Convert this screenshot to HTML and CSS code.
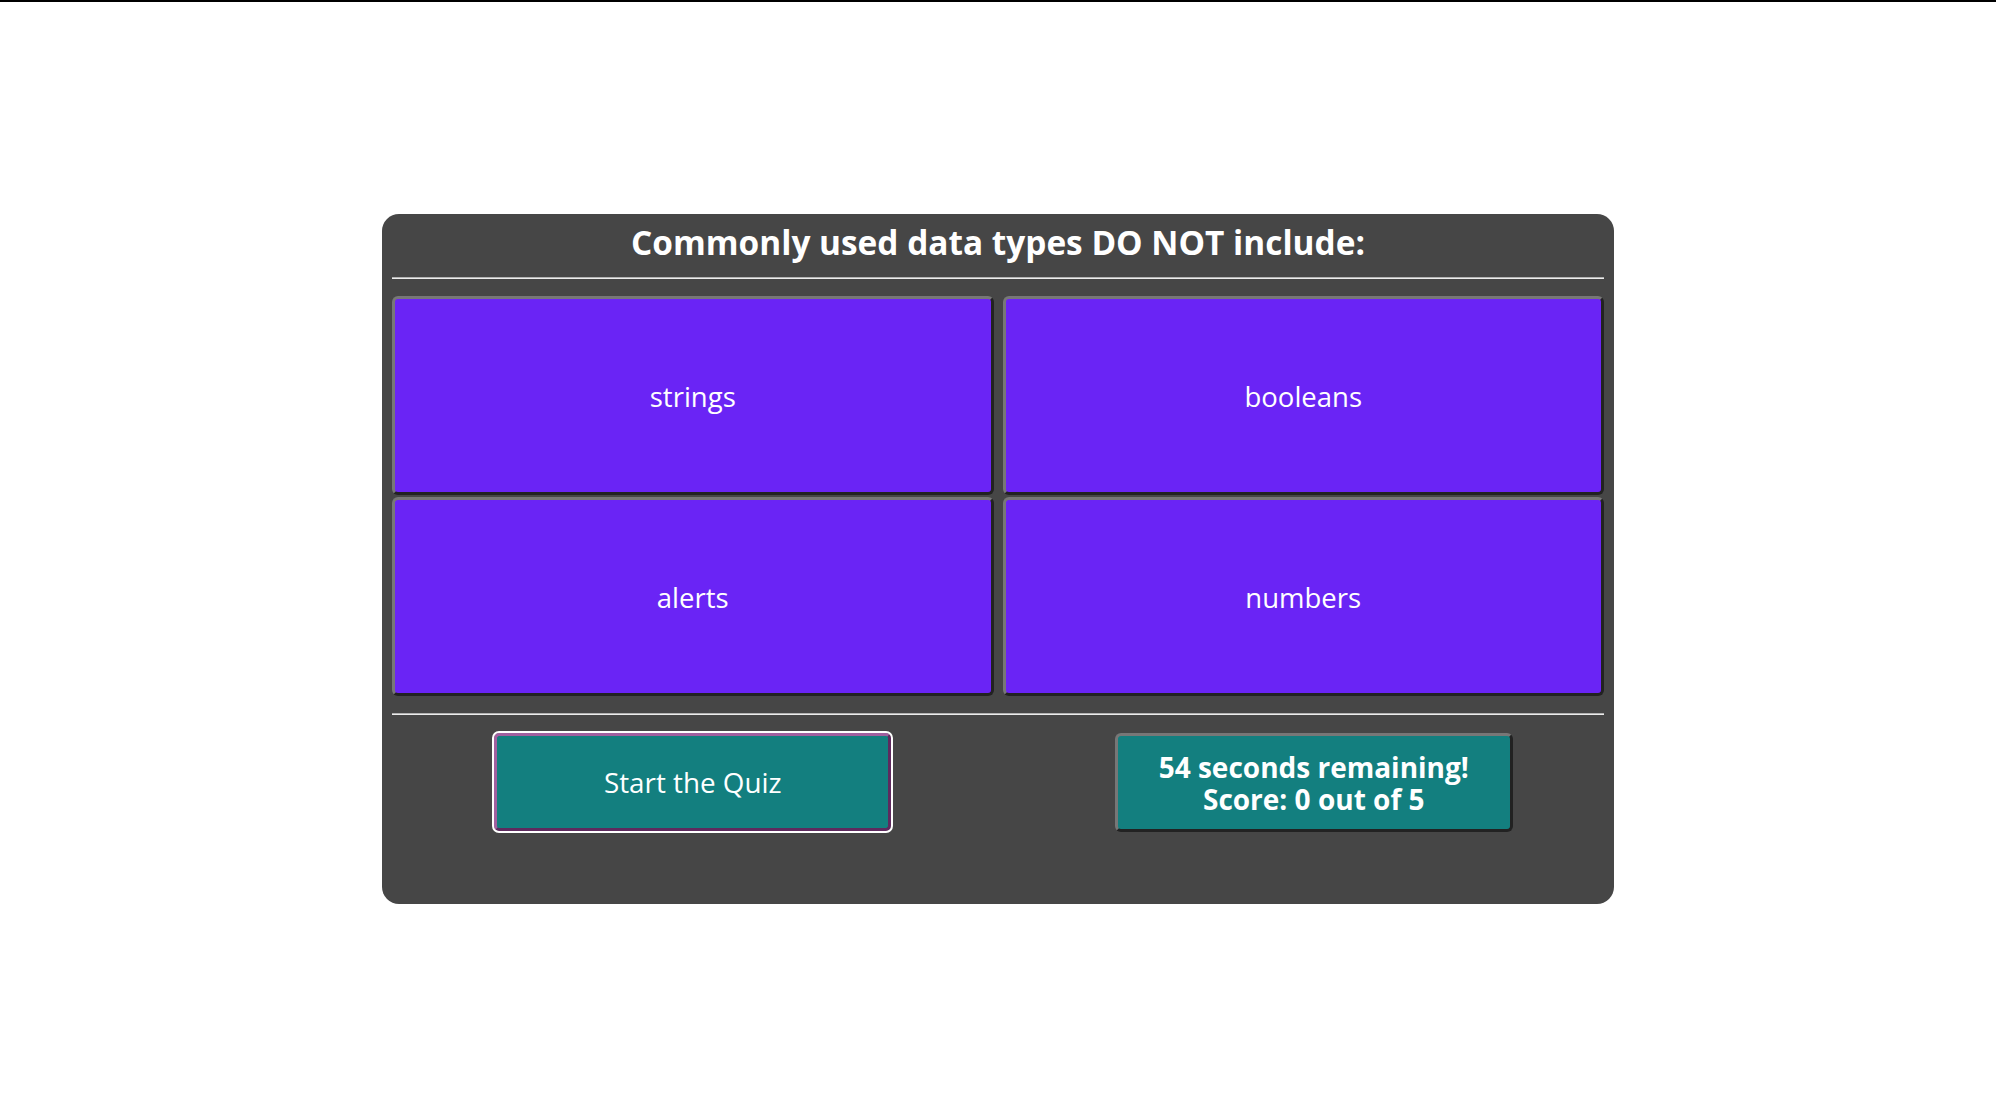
FILE: index.html
```html
<!DOCTYPE html>
<html lang="en">
<head>
<meta charset="utf-8">
<title>Code Quiz</title>
<link rel="stylesheet" href="styles.css">
</head>
<body>
<div class="topline"></div>
<main class="quiz">
  <h1 class="question">Commonly used data types DO NOT include:</h1>
  <hr class="rule">
  <div class="answers">
    <button class="answer">strings</button>
    <button class="answer">booleans</button>
    <button class="answer">alerts</button>
    <button class="answer">numbers</button>
  </div>
  <hr class="rule rule-bottom">
  <div class="footer">
    <button class="start">Start the Quiz</button>
    <div class="status">
      <span class="status-line">54 seconds remaining!</span>
      <span class="status-line">Score: 0 out of 5</span>
    </div>
  </div>
</main>
</body>
</html>
```

FILE: styles.css
```css
html, body {
  margin: 0;
  padding: 0;
  background: #ffffff;
}

body {
  font-family: "Open Sans", "DejaVu Sans", sans-serif;
  color: #ffffff;
}

.topline {
  height: 2px;
  background: #000000;
}

.quiz {
  box-sizing: border-box;
  width: 1232px;
  height: 690px;
  margin: 212px auto 0;
  padding: 0 10px;
  background: #464646;
  border-radius: 17px;
}

.question {
  margin: 0;
  padding: 8px 0 15px;
  font-size: 33.4px;
  line-height: 40px;
  font-weight: 700;
  text-align: center;
  color: #ffffff;
}

.rule {
  margin: 0;
  height: 0;
  border: 0;
  border-top: 1px solid #b2b2b2;
  border-bottom: 1px solid #ececec;
}

.answers {
  display: grid;
  grid-template-columns: 1fr 1fr;
  grid-auto-rows: 199px;
  column-gap: 9px;
  row-gap: 2px;
  margin-top: 17px;
}

.answer {
  box-sizing: border-box;
  margin: 0;
  width: 100%;
  height: 100%;
  padding: 2px 0 0;
  background: #6a24f5;
  color: #ffffff;
  font-family: inherit;
  font-size: 27.5px;
  border: 3px solid;
  border-color: #777777 #222222 #222222 #777777;
  border-radius: 6px;
}

.rule-bottom {
  margin-top: 17px;
}

.footer {
  display: grid;
  grid-template-columns: 1fr 1fr;
  column-gap: 9px;
  margin-top: 18px;
  align-items: start;
}

.start {
  justify-self: center;
  box-sizing: border-box;
  width: 397px;
  height: 98px;
  margin: 0;
  background: #137f7f;
  color: #ffffff;
  font-family: inherit;
  font-size: 27.8px;
  border: 3px solid;
  border-color: #a0609f #5e2a5e #5e2a5e #a0609f;
  border-radius: 5px;
  outline: 2px solid #ffffff;
  outline-offset: 0;
}

.status {
  justify-self: center;
  box-sizing: border-box;
  width: 398px;
  height: 99px;
  margin-left: 21px;
  display: flex;
  flex-direction: column;
  align-items: center;
  justify-content: center;
  text-align: center;
  background: #137f7f;
  font-size: 28px;
  font-weight: 700;
  border: 3px solid;
  border-color: #777777 #222222 #222222 #777777;
  border-radius: 6px;
}

.status-line {
  display: block;
  line-height: 32px;
}
```
